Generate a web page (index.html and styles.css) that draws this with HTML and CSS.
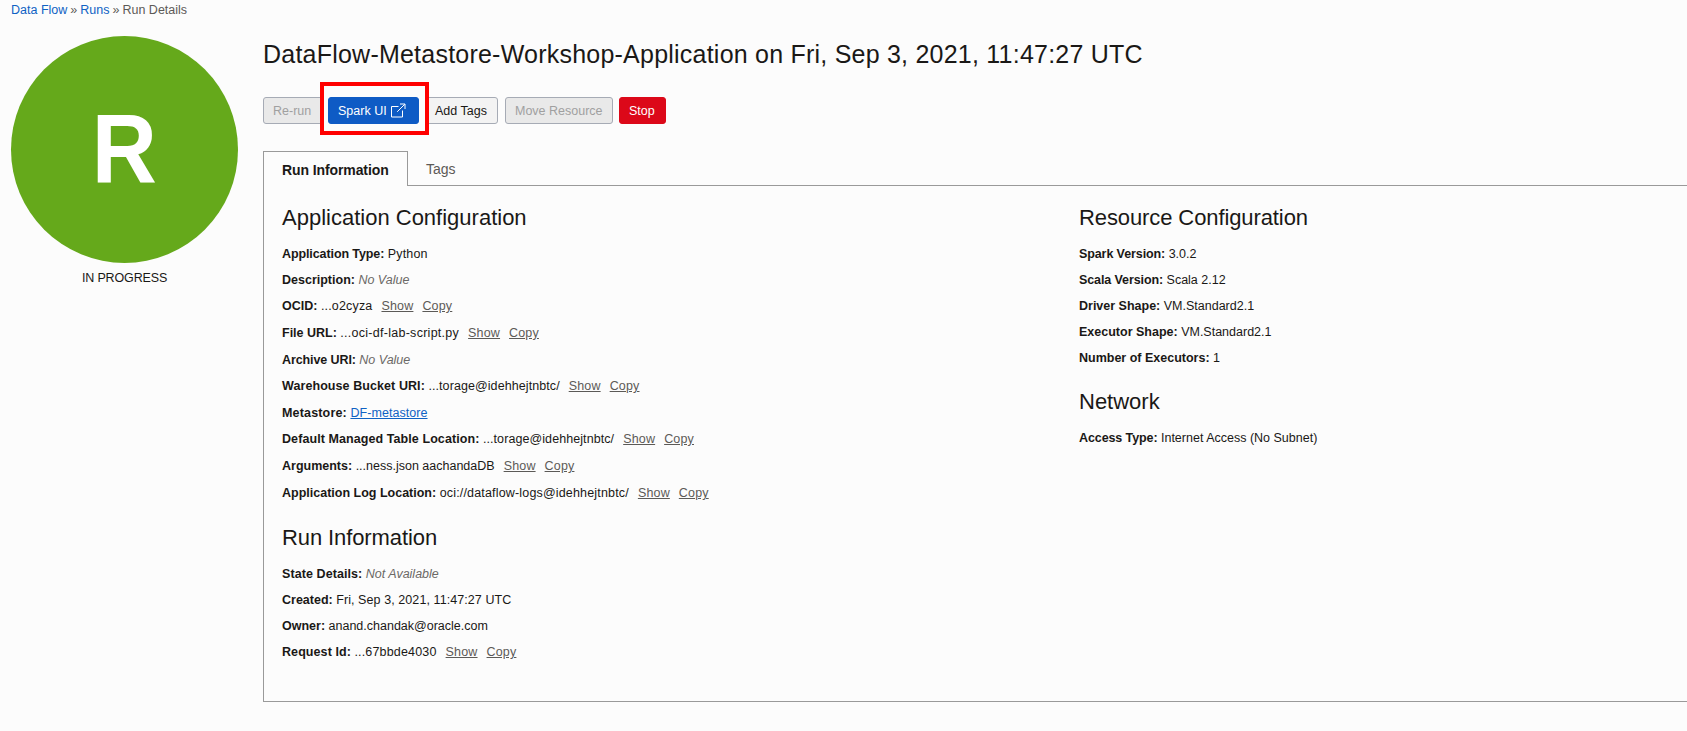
FILE: index.html
```html
<!DOCTYPE html>
<html lang="en">
<head>
<meta charset="utf-8">
<title>Run Details</title>
<link rel="stylesheet" href="styles.css">
</head>
<body>
<nav class="crumbs"><a>Data Flow</a><span class="sep">»</span><a>Runs</a><span class="sep">»</span><span class="here">Run Details</span></nav>
<div class="page">
  <aside class="side">
    <div class="badge"><span>R</span></div>
    <div class="state"><span>IN PROGRESS</span></div>
  </aside>
  <main class="main">
    <h1 class="title"><span>DataFlow-Metastore-Workshop-Application on Fri, Sep 3, 2021, 11:47:27 UTC</span></h1>
    <div class="actions">
      <button class="btn rerun off"><span>Re-run</span></button>
      <div class="spark-wrap"><button class="btn spark"><span>Spark UI</span><svg class="ext" viewBox="0 0 15 15"><path d="M7.5 3.5H.5v10.5h11V7.5M9 1h5v5M13.8 1.2L6.2 8.8"/></svg></button></div>
      <button class="btn add"><span>Add Tags</span></button>
      <button class="btn move off"><span>Move Resource</span></button>
      <button class="btn stop"><span>Stop</span></button>
    </div>
    <div class="tabs"><div class="tab active"><span>Run Information</span></div><div class="tab"><span>Tags</span></div></div>
    <div class="panel">
      <section class="col left">
        <h2><span>Application Configuration</span></h2>
        <p><b class="snug">Application Type:</b> <span class="airy">Python</span></p>
        <p><b>Description:</b> <i>No Value</i></p>
        <p class="tall"><b>OCID:</b> <span class="airy">...o2cyza</span><a>Show</a><a>Copy</a></p>
        <p class="tall"><b>File URL:</b> <span class="wide">...oci-df-lab-script.py</span><a>Show</a><a>Copy</a></p>
        <p><b class="snug">Archive URI:</b> <i>No Value</i></p>
        <p class="tall"><b class="loose">Warehouse Bucket URI:</b> <span class="loose">...torage@idehhejtnbtc/</span><a>Show</a><a>Copy</a></p>
        <p><b class="airy">Metastore:</b> <span class="link">DF-metastore</span></p>
        <p class="tall"><b class="loose">Default Managed Table Location:</b> <span class="loose">...torage@idehhejtnbtc/</span><a>Show</a><a>Copy</a></p>
        <p class="tall"><b>Arguments:</b> <span>...ness.json aachandaDB</span><a>Show</a><a>Copy</a></p>
        <p><b>Application Log Location:</b> <span class="airy">oci://dataflow-logs@idehhejtnbtc/</span><a>Show</a><a>Copy</a></p>
        <h2 class="next snug"><span>Run Information</span></h2>
        <p><b class="loose">State Details:</b> <i>Not Available</i></p>
        <p><b>Created:</b> <span class="loose">Fri, Sep 3, 2021, 11:47:27 UTC</span></p>
        <p><b>Owner:</b> <span>anand.chandak@oracle.com</span></p>
        <p><b class="loose">Request Id:</b> <span class="airy">...67bbde4030</span><a>Show</a><a>Copy</a></p>
      </section>
      <section class="col right">
        <h2 class="snug"><span>Resource Configuration</span></h2>
        <p><b class="snug">Spark Version:</b> <span>3.0.2</span></p>
        <p><b class="snug">Scala Version:</b> <span>Scala 2.12</span></p>
        <p><b>Driver Shape:</b> <span>VM.Standard2.1</span></p>
        <p><b>Executor Shape:</b> <span>VM.Standard2.1</span></p>
        <p><b>Number of Executors:</b> <span>1</span></p>
        <h2 class="next"><span>Network</span></h2>
        <p><b class="snug">Access Type:</b> <span>Internet Access (No Subnet)</span></p>
      </section>
    </div>
  </main>
</div>
</body>
</html>
```

FILE: styles.css
```css
*, *::after { box-sizing: border-box; }
html, body { height: 100%; }
body {
  margin: 0;
  overflow: hidden;
  background: #fcfcfc;
  color: #1a1816;
  font: 12.5px/16px "Liberation Sans", Arial, sans-serif;
}
.snug { letter-spacing: -0.1px; }
.loose { letter-spacing: 0.08px; }
.airy { letter-spacing: 0.17px; }
.wide { letter-spacing: 0.27px; }
.crumbs { display: flex; height: 36px; padding: 2px 0 0 11px; color: #5c5a57; }
.crumbs a { color: #0f62c4; }
.sep { width: 13px; text-align: center; }
.page { display: flex; }
.side { width: 227px; margin-left: 11px; flex: none; }
.badge {
  width: 227px; height: 227px; border-radius: 50%;
  background: #65a91b; color: #fff;
  display: flex; align-items: center; justify-content: center;
  font-size: 98px; font-weight: bold; line-height: 1;
}
.badge span { transform: scaleX(.92); padding-bottom: 1px; }
.state { text-align: center; margin-top: 7px; letter-spacing: -0.15px; }
.main { flex: 1; margin-left: 25px; }
.title { margin: 0; height: 61px; padding-top: 3px; font-size: 25px; line-height: 30px; font-weight: normal; letter-spacing: .225px; }
.actions { display: flex; height: 27px; }
.btn {
  height: 27px; padding: 0 9px; border: 1px solid #a6abb5; border-radius: 3px;
  background: #f3f3f3; color: #1a1816; font: inherit; white-space: nowrap; text-align: left;
}
.off { background: #e9e9e9; color: #a0a0a0; }
.rerun { width: 60px; }
.spark-wrap { position: relative; width: 91px; margin-left: 5px; }
.spark-wrap::after { content: ""; position: absolute; left: -8px; top: -15px; width: 109px; height: 53px; border: 4px solid #f00; }
.spark { width: 91px; display: flex; align-items: center; background: #0e5bc5; border-color: #0e5bc5; color: #fff; }
.ext { width: 15px; height: 15px; margin: -1px 0 0 4px; fill: none; stroke: #fff; stroke-width: 1; }
.add { width: 73px; margin-left: 6px; }
.move { width: 108px; margin-left: 7px; }
.stop { width: 47px; margin-left: 6px; background: #dc0819; border-color: #dc0819; color: #fff; }
.tabs { display: flex; height: 35px; margin-top: 27px; position: relative; font-size: 14px; }
.tab { padding: 10px 18px 0; color: #5c5a57; }
.active { width: 145px; height: 35px; border: 1px solid #9a9a9a; border-bottom: 0; background: #fcfcfc; font-weight: bold; color: #1a1816; letter-spacing: -0.1px; }
.panel { display: flex; height: 517px; margin-top: -1px; padding: 16px 0 0 18px; border: 1px solid #9a9a9a; border-right: 0; }
.left { width: 797px; }
h2 { margin: 0; height: 44px; padding-top: 3px; font-size: 22px; line-height: 26px; font-weight: normal; }
.next { margin-top: 10px; }
.left .next { margin-top: 11px; }
p { margin: 0; height: 26px; white-space: nowrap; }
.tall { height: 27px; }
.col a { color: #5c5a57; text-decoration: underline; margin-left: 9px; letter-spacing: .17px; }
.col i { color: #6b6966; }
.link { color: #0f62c4; text-decoration: underline; letter-spacing: .06px; }
```
